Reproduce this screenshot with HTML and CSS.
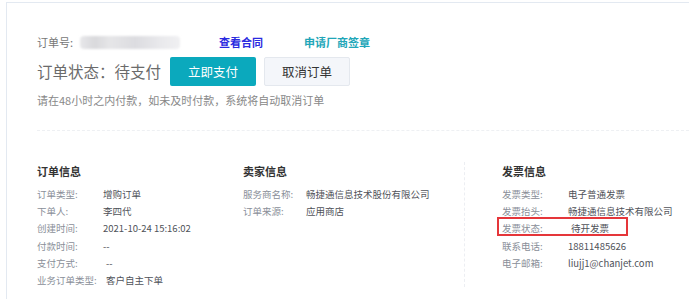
FILE: index.html
```html
<!DOCTYPE html>
<html lang="zh-CN">
<head>
    <meta charset="UTF-8">
    <title>订单详情</title>
    <link rel="stylesheet" href="styles.css">
</head>
<body>
    <div class="card">
        <div class="order-top">
            <div class="order-no">
                <span class="label">订单号:</span>
                <span class="masked"></span>
                <a class="link contract">查看合同</a>
                <a class="link seal">申请厂商签章</a>
            </div>
            <div class="order-status">
                <span class="status-text">订单状态：待支付</span>
                <button class="btn primary">立即支付</button>
                <button class="btn plain">取消订单</button>
            </div>
            <p class="notice">请在48小时之内付款，如未及时付款，系统将自动取消订单</p>
        </div>

        <div class="info">
            <div class="col col-order">
                <h3>订单信息</h3>
                <div class="row"><span class="k">订单类型:</span><span class="v">增购订单</span></div>
                <div class="row"><span class="k">下单人:</span><span class="v">李四代</span></div>
                <div class="row"><span class="k">创建时间:</span><span class="v">2021-10-24 15:16:02</span></div>
                <div class="row"><span class="k">付款时间:</span><span class="v">--</span></div>
                <div class="row"><span class="k">支付方式:</span><span class="v v-pad">--</span></div>
                <div class="row"><span class="k">业务订单类型:</span><span class="v">客户自主下单</span></div>
            </div>
            <div class="col col-seller">
                <h3>卖家信息</h3>
                <div class="row"><span class="k">服务商名称:</span><span class="v">畅捷通信息技术股份有限公司</span></div>
                <div class="row"><span class="k">订单来源:</span><span class="v">应用商店</span></div>
            </div>
            <div class="col col-invoice">
                <h3>发票信息</h3>
                <div class="row"><span class="k">发票类型:</span><span class="v">电子普通发票</span></div>
                <div class="row"><span class="k">发票抬头:</span><span class="v">畅捷通信息技术有限公司</span></div>
                <div class="row"><span class="k">发票状态:</span><span class="v v-pad">待开发票</span><span class="mark"></span></div>
                <div class="row"><span class="k">联系电话:</span><span class="v">18811485626</span></div>
                <div class="row"><span class="k">电子邮箱:</span><span class="v">liujj1@chanjet.com</span></div>
            </div>
        </div>
    </div>
</body>
</html>
```

FILE: styles.css
```css
body {
    margin: 0;
    background: #fff;
    font-family: "Noto Sans CJK SC", "Noto Sans", sans-serif;
    color: #666;
}

.card {
    margin: 2px 0 0 6px;
    border-top: 1px solid #e3e9f1;
    border-left: 1px solid #e3e9f1;
    padding-left: 30px;
    height: 297px;
    box-sizing: border-box;
}

.order-top {
    box-sizing: border-box;
    padding-top: 30px;
    height: 128px;
    border-bottom: 1px dashed #eef0f3;
}

.order-no {
    display: flex;
    align-items: center;
    height: 18px;
    font-size: 11px;
}

.label {
    color: #777;
}

.masked {
    display: inline-block;
    width: 100px;
    height: 13px;
    margin-left: 7px;
    border-radius: 4px;
    background: linear-gradient(90deg, #e8e8ea 0%, #d9d9dc 15%, #e6e6e8 30%, #dcdce0 55%, #e9e9ec 80%, #f0f0f2 100%);
    filter: blur(1px);
}

.link {
    font-weight: bold;
    cursor: pointer;
}

.contract {
    margin-left: 39px;
    color: #2a2ae0;
}

.seal {
    margin-left: 41px;
    color: #21a6b8;
}

.order-status {
    display: flex;
    align-items: center;
    margin-top: 5px;
    height: 30px;
}

.status-text {
    font-size: 15.5px;
    color: #6b6b6b;
}

.btn {
    font-family: inherit;
    font-size: 12.5px;
    width: 86px;
    height: 29px;
    border-radius: 2px;
    cursor: pointer;
    padding: 0;
}

.btn.primary {
    margin-left: 9px;
    background: #0ba9bd;
    border: none;
    color: #fff;
}

.btn.plain {
    margin-left: 8px;
    background: #f4f6fa;
    border: 1px solid #e4e8ee;
    color: #333;
}

.notice {
    margin: 5px 0 0;
    font-size: 11px;
    line-height: 18px;
    color: #888;
}

.info {
    display: grid;
    grid-template-columns: 206px 221px 1fr;
    padding-top: 31px;
}

.col h3 {
    margin: 0 0 6px;
    font-size: 11px;
    line-height: 18px;
    color: #333;
}

.col-invoice {
    border-left: 1px dashed #eceef2;
    padding-left: 37px;
    height: 125px;
}

.row {
    position: relative;
    display: flex;
    font-size: 9.5px;
    line-height: 17.2px;
    white-space: nowrap;
}

.k {
    flex-shrink: 0;
    color: #8a8f99;
}

.v {
    color: #4f5259;
}

.col-order .k {
    width: 66px;
}

.col-order .row:last-child .k {
    width: 69px;
}

.col-seller .k {
    width: 63px;
}

.col-invoice .k {
    width: 66px;
}

.v-pad {
    padding-left: 3px;
}

.mark {
    position: absolute;
    left: -5px;
    top: -3px;
    width: 131px;
    height: 19px;
    border: 2px solid #e5363a;
    box-sizing: border-box;
}
```
